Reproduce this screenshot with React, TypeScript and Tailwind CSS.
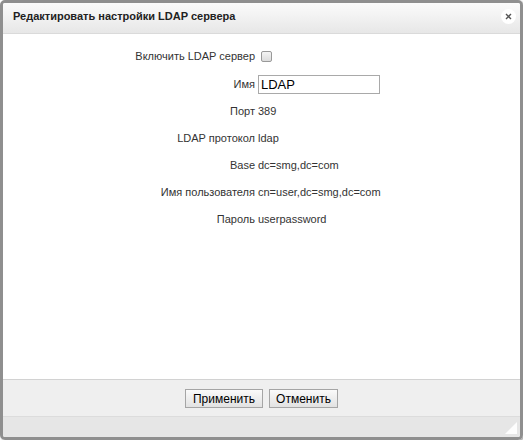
import React from "react";

const rows: { label: string; value: string }[] = [
  { label: "Порт", value: "389" },
  { label: "LDAP протокол", value: "ldap" },
  { label: "Base", value: "dc=smg,dc=com" },
  { label: "Имя пользователя", value: "cn=user,dc=smg,dc=com" },
  { label: "Пароль", value: "userpassword" },
];

function Row({ label, children }: { label: string; children: React.ReactNode }) {
  return (
    <div className="flex h-[27px] items-center">
      <div className="w-[255px] shrink-0 pr-[3px] text-right">{label}</div>
      <div className="flex items-center">{children}</div>
    </div>
  );
}

export default function App() {
  return (
    <div className="h-[440px] w-[523px] bg-white font-['Liberation_Sans',Arial,sans-serif] text-[11px] text-[#333]">
      <div className="flex h-[440px] w-[523px] flex-col overflow-hidden rounded-[5px] border-[3px] border-[#8f8f8f] shadow-[1px_1px_2px_rgba(0,0,0,0.4)]">
        <div className="flex h-[31px] shrink-0 items-center justify-between border-b border-[#dadada] bg-gradient-to-b from-[#fbfbfb] to-[#e7e7e7] pb-[4px] pl-[10px] pr-[4px]">
          <span className="text-[11px] font-bold text-[#222]">Редактировать настройки LDAP сервера</span>
          <button className="flex h-[15px] w-[15px] items-center justify-center rounded-full bg-white text-[#555]">
            <svg width="7" height="7" viewBox="0 0 7 7">
              <path d="M1 1L6 6M6 1L1 6" stroke="#555" strokeWidth="1.4" />
            </svg>
          </button>
        </div>

        <div className="flex-1 bg-white pt-[9px]">
          <Row label="Включить LDAP сервер">
            <span className="ml-[3px] block h-[11px] w-[11px] rounded-[2px] border border-[#999] bg-gradient-to-b from-[#f4f4f4] to-[#dcdcdc]" />
          </Row>
          <div className="pt-[1px]">
            <Row label="Имя">
              <div className="flex h-[19px] w-[122px] items-center border border-[#a9a9a9] bg-white pl-[2px] text-[13px] text-black">
                LDAP
              </div>
            </Row>
            {rows.map((r) => (
              <Row key={r.label} label={r.label}>
                {r.value}
              </Row>
            ))}
          </div>
        </div>

        <div className="flex h-[37px] shrink-0 items-center justify-center gap-[6px] border-t border-[#d2d2d2] bg-[#efefef]">
          <button className="h-[19px] w-[78px] border border-[#a5a5a5] bg-gradient-to-b from-[#fafafa] to-[#e2e2e2] text-[12px] text-black">
            Применить
          </button>
          <button className="h-[19px] w-[69px] border border-[#a5a5a5] bg-gradient-to-b from-[#fafafa] to-[#e2e2e2] text-[12px] text-black">
            Отменить
          </button>
        </div>

        <div className="relative h-[21px] shrink-0 border-t border-[#dcdcdc] bg-[#e6e6e6]">
          <svg className="absolute bottom-[3px] right-[3px]" width="12" height="12" viewBox="0 0 12 12">
            <path d="M12 0L12 12L0 12Z" fill="#fdfdfd" />
          </svg>
        </div>
      </div>
    </div>
  );
}
